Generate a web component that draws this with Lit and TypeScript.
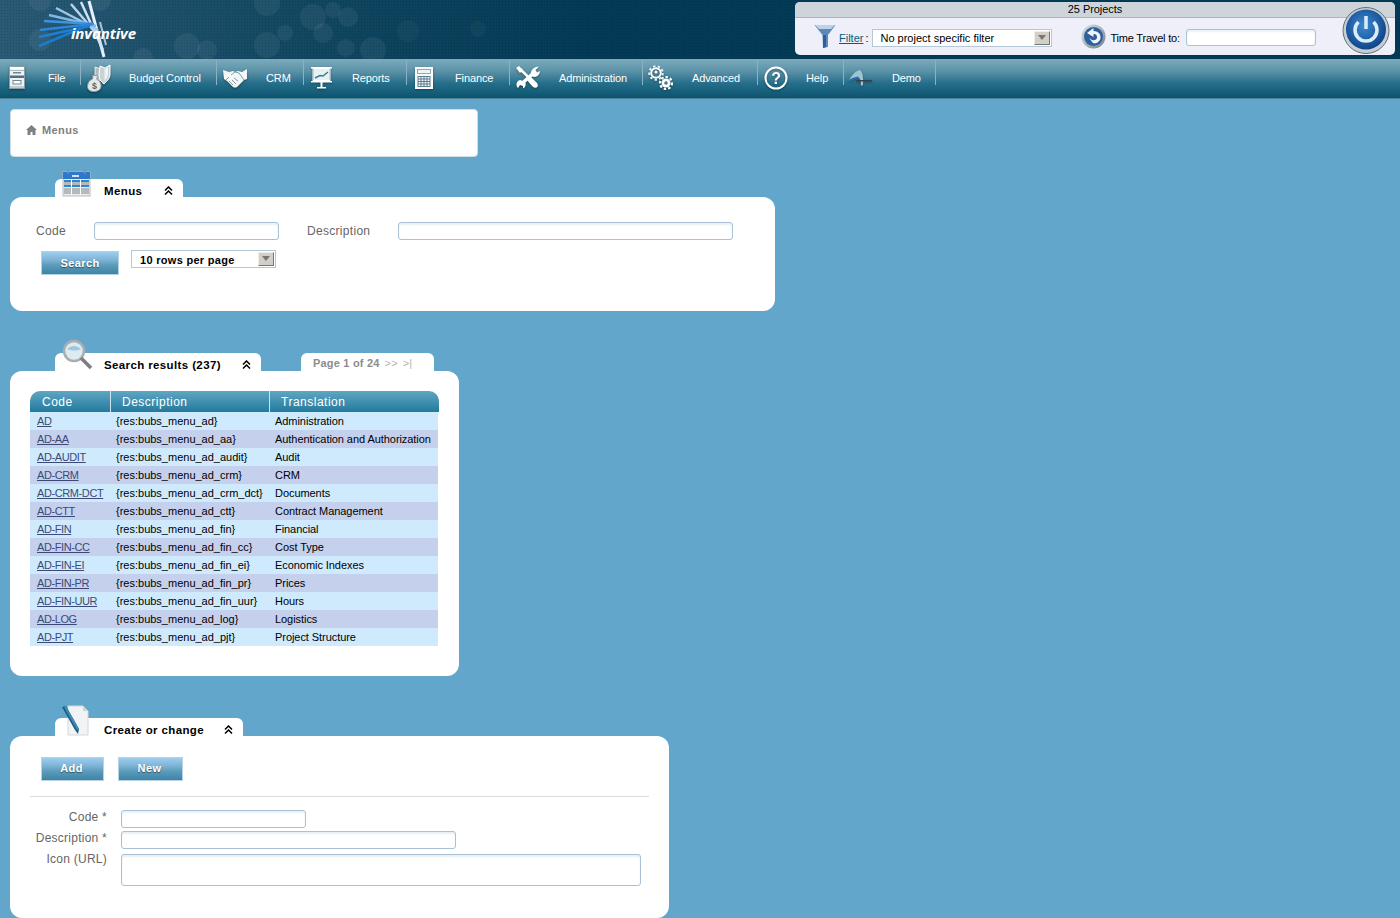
import { LitElement, html, css, svg } from "lit";
import { customElement } from "lit/decorators.js";

const bubbles: [number, number, number][] = [
  [313, 17, 13], [348, 17, 10], [333, 10, 8], [323, 33, 10], [408, 31, 11], [346, 48, 9],
  [373, 50, 13], [285, 33, 8], [267, 45, 13], [267, 3, 13], [187, 46, 13], [207, 50, 10],
  [40, 40, 11], [100, 0, 11], [40, 0, 11], [143, 58, 10], [478, 29, 8],
];

const icons: Record<string, unknown> = {
  file: svg`<svg width="16" height="23" viewBox="0 0 16 23"><rect x=".5" y=".5" width="15" height="22" fill="#eef2f3" stroke="#8aa0a8"/><rect x="1" y="1" width="14" height="2" fill="#fff"/><rect x="1" y="9.500" width="14" height="2.500" fill="#4f7080"/><rect x="1" y="4" width="14" height="1" fill="#a9bcc4"/><rect x="4" y="6" width="8" height="1.500" fill="#6d8894"/><rect x="4" y="14.500" width="8" height="3.500" fill="#fff" stroke="#6d8894"/><rect x="1" y="20" width="14" height="2" fill="#c0ccd1"/></svg>`,
  budget: svg`<svg width="24" height="29" viewBox="0 0 24 29"><path d="M8 4 L14 6 L14 17 C12 20 10 20 8 19 Z" fill="#aebcc0" stroke="#e6edef"/><path d="M13 3 L18 5 L23 2 V11 C23 16 19 19 17 21 C14 19 12 16 12 11 Z" fill="#c9d3d6" stroke="#fff"/><path d="M17.500 6 L21 4.500 V11 C21 14 19 16 17.500 18 Z" fill="#eef2f3"/><path d="M6 12 L11 13 L9.500 16 C13 18 14.500 21 14 24 C13.500 27 10.500 28.500 7 28.500 C3 28.500 .5 26.500 .5 23.500 C.5 20 2.500 17 5.500 16 Z" fill="#e7e8e5" stroke="#8c9a9e"/><text x="7.500" y="26" font-family="Liberation Sans" font-size="9" font-weight="700" text-anchor="middle" fill="#59646a">$</text></svg>`,
  crm: svg`<svg width="24" height="20" viewBox="0 0 24 20"><path d="M0 2 L6 4 L10 3 L12 4 L15 3 L19 4 L24 1 L24 11 L21 12 L14 19 Q12 20 10 19 L4 13 L1 11 Z" fill="#f4f7f8"/><path d="M8 7 L12 4 L16 5 L21 12 M11 10 L15 13 M9 12 L13 16 M6 13 L10 17 M3 12 L6 9" stroke="#7f9ea9" stroke-width="1" fill="none"/></svg>`,
  reports: svg`<svg width="21" height="22" viewBox="0 0 21 22"><rect x="0" y="0" width="21" height="1.500" fill="#fff"/><rect x="2" y="1.500" width="17" height="12" fill="#3d7e97" stroke="#fff" stroke-width="1"/><path d="M2.500 2 H18.500 V13 H2.500Z" fill="#eaf0f2"/><path d="M4 11 L9 8.500 L12 9 L17 5" stroke="#2f7f9e" stroke-width="1.500" fill="none"/><rect x="0" y="14" width="21" height="1.500" fill="#fff"/><rect x="9.500" y="15" width="2" height="5" fill="#fff"/><rect x="6" y="20" width="9" height="1.500" fill="#fff"/></svg>`,
  finance: svg`<svg width="18" height="22" viewBox="0 0 18 22"><rect x=".5" y=".5" width="17" height="21" fill="#f6f8f9" stroke="#fff"/><rect x="2.500" y="2.500" width="13" height="4" fill="#eef2f4" stroke="#6c8b99" stroke-width=".7"/><path d="M3 9.500H15M3 12H15M3 14.500H15M3 17H15M3 19.500H15M3 9V20M6 9V20M9 9V20M12 9V20M15 9V20" stroke="#5a7c8c" stroke-width="1"/></svg>`,
  admin: svg`<svg width="24" height="23" viewBox="0 0 24 23"><path d="M4 3 L20 18.500" stroke="#fff" stroke-width="2.500"/><path d="M0 2 L3 0 L7 4 L4 7 Z" fill="#fff"/><path d="M15 11 L21 17 Q23 20 20.500 21.500 Q18 22.500 16 20 L11 14 Z" fill="#fff"/><path d="M17.500 7 L6 17.500" stroke="#fff" stroke-width="3.500"/><path d="M4 14 C0 15 -.5 20 2 22 L4 19 L7 20 L7 22.500 C10 21 10.500 17 8.500 15.500 Z" fill="#fff"/><path d="M15 9 C14 4 18 1 23 .5 L19.500 4 L21 6.500 L24 5 C24 9 20 12 16.500 10.500 Z" fill="#fff"/></svg>`,
  advanced: svg`<svg width="25" height="25" viewBox="0 0 25 25"><circle cx="8" cy="8" r="4.800" fill="none" stroke="#fff" stroke-width="2"/><circle cx="8" cy="8" r="6.800" fill="none" stroke="#e8eff1" stroke-width="2" stroke-dasharray="2.500 2.300"/><circle cx="8" cy="7" r="1.500" fill="#fff"/><circle cx="18" cy="18" r="4.500" fill="#fff"/><circle cx="18" cy="18" r="6" fill="none" stroke="#fff" stroke-width="2.200" stroke-dasharray="2.500 2"/><circle cx="18" cy="18" r="1.800" fill="#3f7c95"/></svg>`,
  help: svg`<svg width="24" height="24" viewBox="0 0 24 24"><circle cx="12" cy="12" r="10.500" fill="none" stroke="#fff" stroke-width="2"/><text x="12" y="17.500" font-family="Liberation Sans" font-size="16" font-weight="700" text-anchor="middle" fill="#fff">?</text></svg>`,
  demo: svg`<svg width="24" height="16" viewBox="0 0 24 16"><path d="M0 10 Q6 0 11 0 Q15 3 14 15 L12 16 Q12 8 9 7 Q4 7 0 10Z" fill="#9fc3d3"/><path d="M0 11 L9 7" stroke="#1e73c4" stroke-width="1.500"/><rect x="7" y="10" width="16" height="1.500" fill="#33424a"/></svg>`,
};

const nav = [
  { n: "File", i: "file", w: 81, c: 33, g: 15 },
  { n: "Budget Control", i: "budget", w: 136, c: 35, g: 13 },
  { n: "CRM", i: "crm", w: 87, c: 35, g: 14 },
  { n: "Reports", i: "reports", w: 103, c: 35, g: 13 },
  { n: "Finance", i: "finance", w: 103, c: 33, g: 15 },
  { n: "Administration", i: "admin", w: 133, c: 35, g: 14 },
  { n: "Advanced", i: "advanced", w: 115, c: 35, g: 14 },
  { n: "Help", i: "help", w: 86, c: 35, g: 13 },
  { n: "Demo", i: "demo", w: 92, c: 34, g: 14 },
];

const rows = [
  ["AD", "{res:bubs_menu_ad}", "Administration"],
  ["AD-AA", "{res:bubs_menu_ad_aa}", "Authentication and Authorization"],
  ["AD-AUDIT", "{res:bubs_menu_ad_audit}", "Audit"],
  ["AD-CRM", "{res:bubs_menu_ad_crm}", "CRM"],
  ["AD-CRM-DCT", "{res:bubs_menu_ad_crm_dct}", "Documents"],
  ["AD-CTT", "{res:bubs_menu_ad_ctt}", "Contract Management"],
  ["AD-FIN", "{res:bubs_menu_ad_fin}", "Financial"],
  ["AD-FIN-CC", "{res:bubs_menu_ad_fin_cc}", "Cost Type"],
  ["AD-FIN-EI", "{res:bubs_menu_ad_fin_ei}", "Economic Indexes"],
  ["AD-FIN-PR", "{res:bubs_menu_ad_fin_pr}", "Prices"],
  ["AD-FIN-UUR", "{res:bubs_menu_ad_fin_uur}", "Hours"],
  ["AD-LOG", "{res:bubs_menu_ad_log}", "Logistics"],
  ["AD-PJT", "{res:bubs_menu_ad_pjt}", "Project Structure"],
];

const chevrons = html`<svg class="chev" width="9" height="9" viewBox="0 0 9 9"><path d="M1 4.500 L4.500 1 L8 4.500 M1 8.500 L4.500 5 L8 8.500" fill="none" stroke="#000" stroke-width="1.500"/></svg>`;

@customElement("app-root")
export class AppRoot extends LitElement {
  static styles = css`
    :host { display: block; width: 1400px; height: 918px; overflow: hidden; background: #62a7cb; font-family: "Liberation Sans", Arial, sans-serif; font-size: 11px; color: #000; }
    .header { position: relative; height: 59px; display: flex; justify-content: flex-end; align-items: flex-start; overflow: hidden;
      background-color: #043a55; background-image: radial-gradient(rgba(0,0,0,.16) 1px, transparent 1px), linear-gradient(90deg, #2a5a76 0, #114761 22%, #033a55 42%); background-size: 3px 3px, 100% 100%; }
    .deco { position: absolute; left: 0; top: 0; }
    .logo { position: absolute; left: 32px; top: 0; width: 110px; height: 59px; }
    .logo-text { position: absolute; left: 39px; top: 24px; font: italic 700 15px "Open Sans", "Liberation Sans", sans-serif; color: #fff; letter-spacing: -.1px; line-height: 18px; }
    .box { position: relative; width: 600px; height: 53px; margin: 2px 5px 0 0; border-radius: 5px; background: #eeeff8; overflow: visible; }
    .box-title { height: 15px; line-height: 14px; text-align: center; background: #ced5da; border-bottom: 1px solid #aab6bd; border-radius: 5px 5px 0 0; letter-spacing: -.05px; box-sizing: content-box; }
    .box-row { display: flex; align-items: center; height: 37px; padding: 2px 0 0 19px; box-sizing: border-box; }
    .box-row svg.fn { margin-top: -3px; }
    .box-row a { color: #00607f; text-decoration: underline; margin-left: 3px; }
    .colon { margin-left: 2px; width: 9px; }
    .sel { position: relative; box-sizing: border-box; background: #fff; border: 1px solid #b5c8d8; height: 18px; line-height: 16px; padding-left: 7px; }
    .box .sel { width: 180px; margin-left: -2px; }
    .arrow { position: absolute; right: 1px; top: 1px; width: 16px; height: 14px; box-sizing: border-box; background: #d2cfc8; border: 1px solid; border-color: #f0efea #77766f #77766f #f0efea; }
    .arrow::after { content: ""; position: absolute; left: 3px; top: 3px; border: 4px solid transparent; border-top: 5px solid #77766f; border-bottom: 0; }
    .globe { margin-left: 29px; margin-right: 4px; display: block; margin-top: -2px; }
    .tt { width: 76px; white-space: nowrap; letter-spacing: -.2px; }
    .box input { width: 130px; height: 17px; }
    .power { position: absolute; right: 3px; top: 4px; }
    nav { height: 40px; display: flex; box-sizing: border-box; border-bottom: 1px solid #4f7f93; background: linear-gradient(#7cabbd 0, #5d93a8 30%, #266f8b 62%, #0b536f 100%); color: #fff; letter-spacing: -.12px; }
    .item { position: relative; height: 39px; display: flex; align-items: center; box-sizing: border-box; padding-bottom: 2px; }
    .item::after { content: ""; position: absolute; right: 0; height: 25px; width: 1px; background: #8bb2c2; top: 1px; }
    .item .ic { display: flex; justify-content: center; align-items: center; flex: none; filter: drop-shadow(0 1px 1px rgba(0,0,0,.35)); }
    .label { white-space: nowrap; }
    main { display: flex; flex-direction: column; align-items: flex-start; padding: 10px 0 0 10px; }
    .crumb { box-sizing: border-box; width: 468px; height: 48px; background: #fff; border: 1px solid #d2dde4; border-radius: 4px; padding: 0 15px 6px; display: flex; align-items: center; color: #808080; font-weight: 700; gap: 5px; font-size: 11px; letter-spacing: .4px; }
    .sec { margin-top: 22px; }
    .sec.far { margin-top: 42px; }
    .tabs { display: flex; height: 18px; padding-left: 45px; gap: 40px; }
    .tab { position: relative; display: flex; align-items: center; background: #fff; border-radius: 6px 6px 0 0; height: 18px; box-sizing: border-box; padding: 6px 0 0 49px; font-weight: 700; font-size: 11.500px; letter-spacing: .38px; white-space: nowrap; }
    .tab .ticon { position: absolute; left: 6px; bottom: 0; }
    .tab .chev { position: absolute; top: 7px; }
    .chev-slot { position: absolute; top: 0; }
    .pager { color: #8c8c8c; font-weight: 700; display: flex; background: #fff; border-radius: 6px 6px 0 0; height: 18px; width: 133px; box-sizing: border-box; padding: 2px 0 0 12px; align-items: center; letter-spacing: .2px; white-space: nowrap; }
    .pager span { color: #b4b4b4; font-weight: 400; margin-left: 5px; }
    .pager span + span { margin-left: 5px; letter-spacing: 0; }
    .panel { background: #fff; border-radius: 12px; box-sizing: border-box; }
    .p1 { width: 765px; height: 114px; padding: 25px 0 0 26px; }
    .lbl { color: #666; font-size: 12px; letter-spacing: .3px; }
    input, textarea { display: block; box-sizing: border-box; background: #fff; border: 1px solid #a9c0d5; border-radius: 3px; box-shadow: inset 0 2px 2px #e8f0f6; padding: 0; margin: 0; outline: none; resize: none; }
    .search-row { display: flex; align-items: center; height: 18px; }
    .search-row .code-l { width: 58px; }
    .search-row .desc-l { width: 91px; margin-left: 28px; }
    .in-code { width: 185px; height: 18px; }
    .in-desc { width: 335px; height: 18px; }
    .btns { display: flex; align-items: flex-start; margin: 11px 0 0 5px; }
    button { font: 700 11px "Liberation Sans", sans-serif; color: #fff; letter-spacing: .4px; height: 24px; border: 1px solid #b6d3e5; background: linear-gradient(#9ccdee 0, #7fb4d6 35%, #5c9bbb 60%, #3f83a5 100%); text-shadow: 0 1px 1px rgba(0,0,0,.45); padding: 0 2px 2px 0; margin: 0; display: block; }
    .b-search { width: 78px; padding: 0; }
    .rows { width: 145px; margin: -1px 0 0 12px; font: 700 11px/19px "Liberation Sans", sans-serif; letter-spacing: .3px; padding-left: 8px; }
    .p2 { width: 449px; height: 305px; padding: 20px 0 0 20px; }
    table { border-collapse: separate; border-spacing: 0; table-layout: fixed; width: 409px; }
    th { height: 21px; padding: 0 0 0 11px; text-align: left; font-weight: 400; font-size: 12px; letter-spacing: .5px; color: #fff; background: linear-gradient(#5fa6c4, #237a9c); border-left: 1px solid #cfe3ee; box-sizing: border-box; }
    th:first-child { border-left: 0; border-radius: 10px 0 0 0; padding-left: 12px; }
    th:last-child { border-radius: 0 10px 0 0; }
    td { height: 18px; padding: 0 0 0 6px; box-sizing: border-box; white-space: nowrap; overflow: hidden; font-size: 11px; background: #cfeafd; line-height: 18px; }
    td:first-child { padding-left: 7px; }
    td:last-child { background: none; padding: 0; }
    td:last-child div { width: 169px; height: 18px; padding-left: 6px; box-sizing: border-box; background: #cfeafd; letter-spacing: -.06px; }
    tr:nth-child(even) td { background: #c5d0ec; }
    tr:nth-child(even) td:last-child { background: none; }
    tr:nth-child(even) td:last-child div { background: #c5d0ec; }
    td a { color: #3b4a78; text-decoration: underline; padding-right: 1px; letter-spacing: -.4px; }
    .p3 { width: 659px; height: 182px; padding: 21px 20px 0 20px; }
    .p3 .btns { margin: 0 0 0 11px; gap: 14px; }
    .b-add { width: 63px; }
    .b-new { width: 65px; }
    hr { border: 0; border-top: 1px solid #dcdcdc; margin: 15px 0 0 0; }
    .form { display: grid; grid-template-columns: 77px auto; column-gap: 14px; row-gap: 3px; margin-top: 13px; justify-content: start; }
    .form .lbl { text-align: right; line-height: 14px; letter-spacing: .25px; white-space: nowrap; }
    .f-code { width: 185px; height: 18px; }
    .f-desc { width: 335px; height: 18px; }
    .f-icon { width: 520px; height: 32px; margin-top: 2px; }
  `;

  render() {
    return html`
      <div class="header">
        <svg class="deco" width="520" height="59">
          ${bubbles.map(([x, y, r]) => svg`<circle cx=${x} cy=${y} r=${r} fill="#fff" fill-opacity="${x > 400 ? 0.035 : 0.06}"/>`)}
        </svg>
        <div class="logo">
          <svg width="110" height="59" viewBox="0 0 110 59">
            <g fill="none">
              <path d="M72 57 L57 1" stroke="#e6f0fa" stroke-width="3"/>
              <path d="M71 50 L49 2" stroke="#cfe1f5" stroke-width="2.500"/>
              <path d="M68 38 L39 4" stroke="#b8d4ee" stroke-width="2.500"/>
              <path d="M66 30 L24 8" stroke="#9cc6ea" stroke-width="2.500"/>
              <path d="M64 26 L17 15" stroke="#7fb6e6" stroke-width="2.500"/>
              <path d="M62 24 L12 21" stroke="#3c94e0" stroke-width="2.500"/>
              <path d="M60 24 L8 30" stroke="#2b87d9" stroke-width="2.500"/>
              <path d="M58 26 L7 37" stroke="#1f7fd5" stroke-width="2.500"/>
              <path d="M50 28 L7 46" stroke="#1b7ccf" stroke-width="2.500"/>
              <path d="M68 22 L74 45" stroke="#a8c6de" stroke-width="2"/>
            </g>
          </svg>
          <span class="logo-text">invantive</span>
        </div>
        <div class="box">
          <div class="box-title">25 Projects</div>
          <div class="box-row">
            <svg class="fn" width="22" height="24" viewBox="0 0 22 24"><path d="M.5 1 H21.500 L14 11 V23 L9 24 L8.500 11 Z" fill="#5d88ba"/><path d="M1 1 H21 L17 5 H5 Z" fill="#bcd3e6"/><path d="M9 11 L12 11 L12 23 L9 24 Z" fill="#2e5f9c"/></svg>
            <a>Filter </a><span class="colon">:</span>
            <div class="sel">No project specific filter<span class="arrow"></span></div>
            <svg class="globe" width="25" height="25" viewBox="0 0 25 25"><defs><linearGradient id="gm" x1="0" y1="0" x2="1" y2="1"><stop offset="0" stop-color="#dfe4e8"/><stop offset="1" stop-color="#6f7f8b"/></linearGradient></defs><circle cx="12.500" cy="12.500" r="12" fill="url(#gm)"/><circle cx="12.500" cy="12.500" r="9.500" fill="#2f5f9f"/><path d="M6 9 L12.500 4 L12.500 7 C17 7 20 10 19.500 14 C19 18 15 20 12 19 L8 14 L11 16 C14 17 16.500 15 16 12.500 C15.500 10.500 14 10 12.500 10 L12.500 13 Z" fill="#f2f5f7"/></svg>
            <span class="tt">Time Travel to:</span>
            <input />
          </div>
          <svg class="power" width="50" height="50" viewBox="0 0 50 50">
            <defs><radialGradient id="pw" cx=".45" cy=".4" r=".65"><stop offset="0" stop-color="#3d8ad0"/><stop offset="1" stop-color="#0c3f85"/></radialGradient></defs>
            <circle cx="24" cy="24.500" r="23" fill="#c7ced3" stroke="#5f6f7a" stroke-width="1"/>
            <circle cx="24" cy="23.500" r="20" fill="url(#pw)"/>
            <path d="M16.500 16 A11 11 0 1 0 31.500 16" fill="none" stroke="#d9ecf7" stroke-width="3.500"/>
            <path d="M24 10 V23" stroke="#d9ecf7" stroke-width="3.500"/>
          </svg>
        </div>
      </div>
      <nav>
        ${nav.map((n) => html`<div class="item" style="width:${n.w}px">
          <span class="ic" style="width:${n.c}px;margin-right:${n.g}px">${icons[n.i]}</span>
          <span class="label">${n.n}</span>
        </div>`)}
      </nav>
      <main>
        <div class="crumb">
          <svg width="11" height="10" viewBox="0 0 11 10"><path d="M5.500 0 L11 5 H9.500 V10 H6.500 V7 H4.500 V10 H1.500 V5 H0 Z" fill="#808080"/></svg>
          Menus
        </div>

        <div class="sec">
          <div class="tabs">
            <div class="tab" style="width:128px">
              <svg class="ticon" width="30" height="28" viewBox="0 0 30 28"><rect x="2" y="3" width="27" height="24" fill="#e9ebec" stroke="#b8bcbf"/><rect x="2" y="3" width="27" height="7" fill="#2e78cb"/><rect x="6" y="0" width="1.500" height="5" fill="#8a8f94"/><rect x="23" y="0" width="1.500" height="5" fill="#8a8f94"/><rect x="11" y="6" width="7" height="2" fill="#cfe3f5"/><path d="M3 11 H28 V13 H3Z M3 16 H28 V18 H3Z" fill="#2e86d3"/><path d="M3 13 H28 V16 H3Z M3 19 H28 V25 H3Z" fill="#b5b9bb"/><path d="M10.500 10 V26 M19.500 10 V26" stroke="#fff" stroke-width="1"/></svg>
              Menus
              <span class="chev-slot" style="left:109px">${chevrons}</span>
            </div>
          </div>
          <div class="panel p1">
            <div class="search-row">
              <span class="lbl code-l">Code</span><input class="in-code" />
              <span class="lbl desc-l">Description</span><input class="in-desc" />
            </div>
            <div class="btns">
              <button class="b-search">Search</button>
              <div class="sel rows">10 rows per page<span class="arrow"></span></div>
            </div>
          </div>
        </div>

        <div class="sec far">
          <div class="tabs">
            <div class="tab" style="width:206px">
              <svg class="ticon" width="32" height="32" viewBox="0 0 32 32"><circle cx="13" cy="12" r="10" fill="#dceaf2" stroke="#a9adb0" stroke-width="2.500"/><path d="M6 10 Q13 4 20 10 Q13 13 6 10Z" fill="#9cc7dc"/><path d="M20 19 L30 29" stroke="#7c7f82" stroke-width="3.500"/></svg>
              Search results (237)
              <span class="chev-slot" style="left:187px">${chevrons}</span>
            </div>
            <div class="pager">Page 1 of 24<span>&gt;&gt;</span><span>&gt;|</span></div>
          </div>
          <div class="panel p2">
            <table>
              <colgroup><col style="width:80px" /><col style="width:159px" /><col style="width:170px" /></colgroup>
              <thead><tr><th>Code</th><th>Description</th><th>Translation</th></tr></thead>
              <tbody>
                ${rows.map((r) => html`<tr><td><a>${r[0]}</a></td><td>${r[1]}</td><td><div>${r[2]}</div></td></tr>`)}
              </tbody>
            </table>
          </div>
        </div>

        <div class="sec far">
          <div class="tabs">
            <div class="tab" style="width:188px">
              <svg class="ticon" width="28" height="31" viewBox="0 0 28 31"><path d="M7 1 H22 L27 6 V30 H7 Z" fill="#f2f3f4" stroke="#d4d6d8"/><path d="M22 1 V6 H27 Z" fill="#cfd2d4"/><path d="M1 2 L14 25 L17 29 L18 24 L5 1 Z" fill="#1e5d84"/><path d="M5 1 L18 24 L16 25 L3 2 Z" fill="#3c8cb5"/></svg>
              Create or change
              <span class="chev-slot" style="left:169px">${chevrons}</span>
            </div>
          </div>
          <div class="panel p3">
            <div class="btns">
              <button class="b-add">Add</button>
              <button class="b-new">New</button>
            </div>
            <hr />
            <div class="form">
              <span class="lbl">Code *</span><input class="f-code" />
              <span class="lbl">Description *</span><input class="f-desc" />
              <span class="lbl">Icon (URL)</span><textarea class="f-icon"></textarea>
            </div>
          </div>
        </div>
      </main>
    `;
  }
}
